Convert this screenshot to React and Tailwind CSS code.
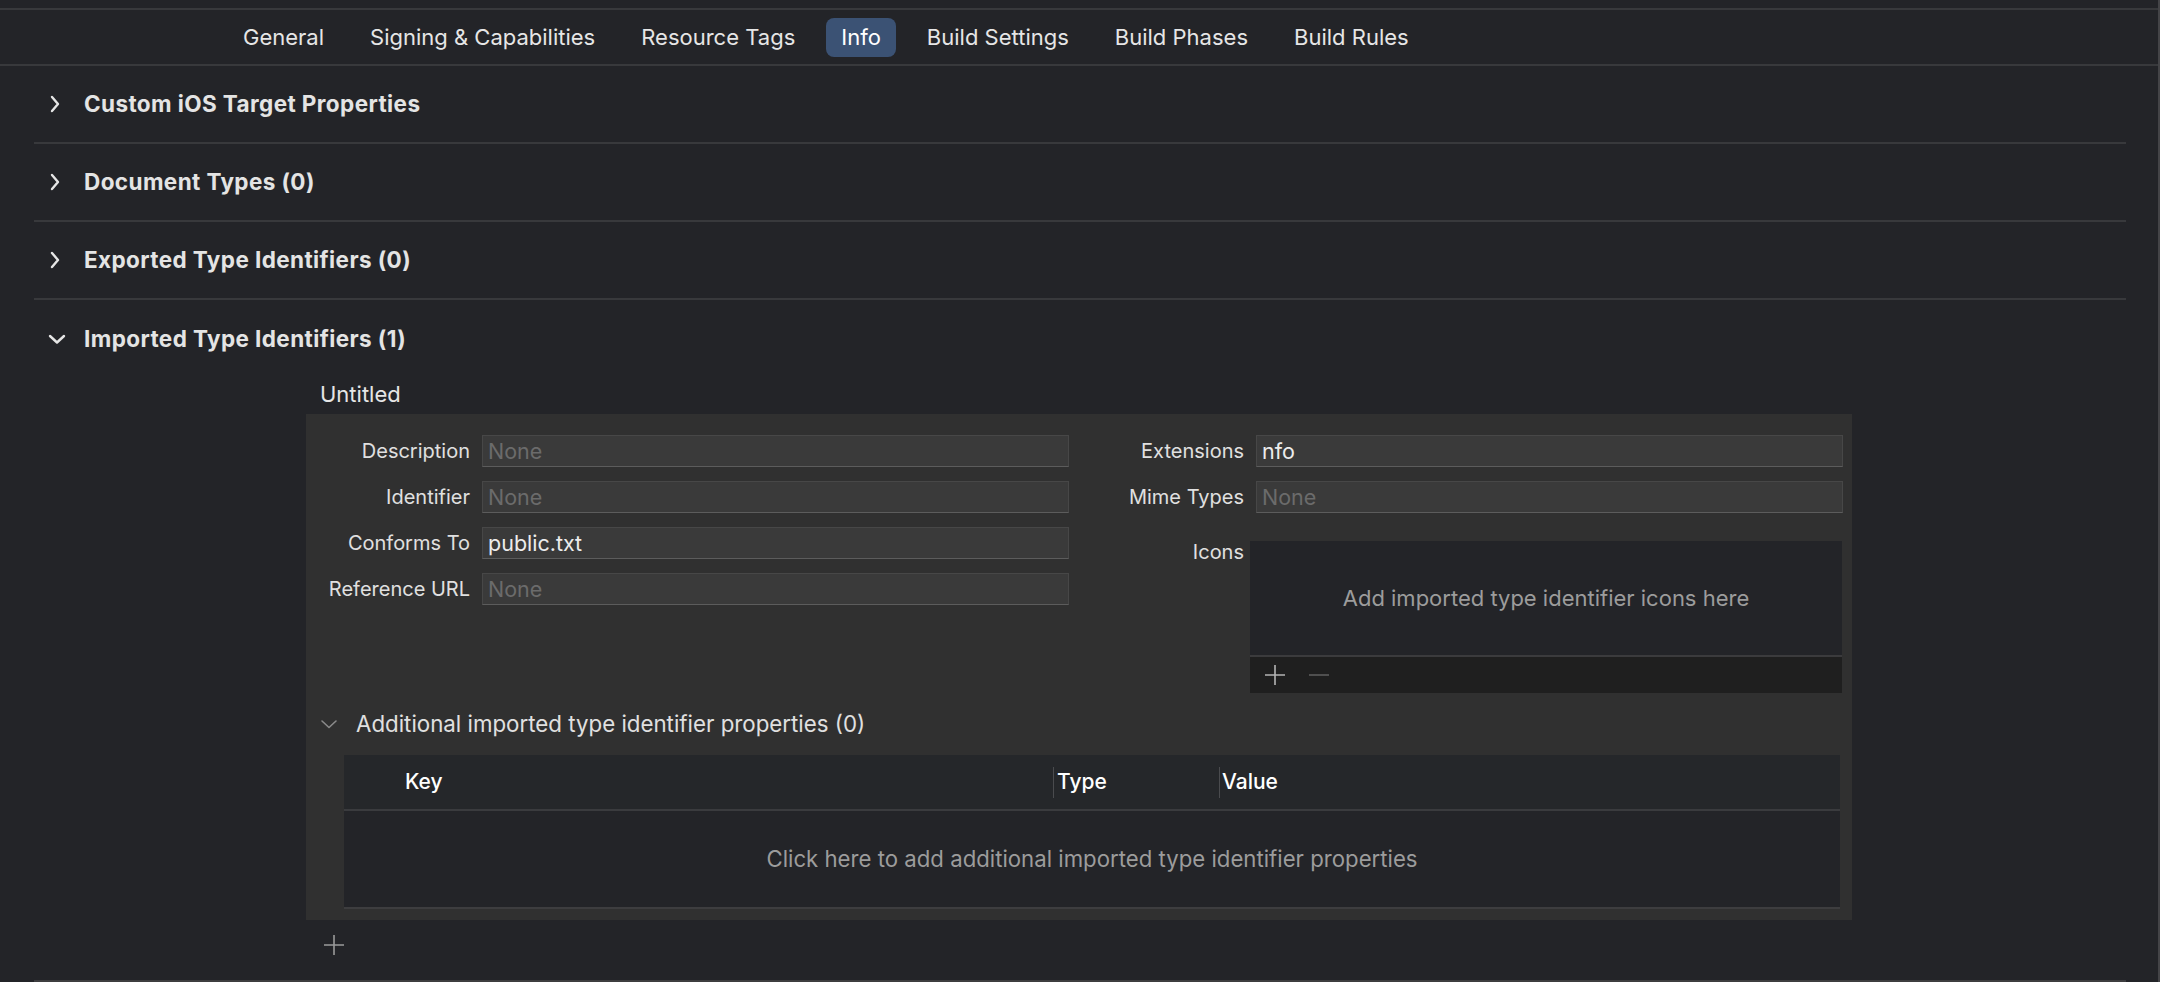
const TABS = ['General', 'Signing & Capabilities', 'Resource Tags', 'Info', 'Build Settings', 'Build Phases', 'Build Rules'];

const COLLAPSED = ['Custom iOS Target Properties', 'Document Types (0)', 'Exported Type Identifiers (0)'];

const LEFT_FIELDS = [
  { label: 'Description', value: '' },
  { label: 'Identifier', value: '' },
  { label: 'Conforms To', value: 'public.txt' },
  { label: 'Reference URL', value: '' },
];

function ChevronRight() {
  return (
    <svg width="14" height="18" viewBox="0 0 14 18" className="text-[#e6e6e6]">
      <polyline points="4,2 10,9 4,16" fill="none" stroke="currentColor" strokeWidth="2.4" strokeLinecap="round" strokeLinejoin="round" />
    </svg>
  );
}

function ChevronDown({ className = 'text-[#e6e6e6]', w = 2.4 }) {
  return (
    <svg width="18" height="14" viewBox="0 0 18 14" className={className}>
      <polyline points="2,4 9,10.5 16,4" fill="none" stroke="currentColor" strokeWidth={w} strokeLinecap="round" strokeLinejoin="round" />
    </svg>
  );
}

function Plus({ className }) {
  return (
    <svg width="22" height="22" viewBox="0 0 22 22" className={className}>
      <path d="M11 1v20M1 11h20" stroke="currentColor" strokeWidth="1.6" />
    </svg>
  );
}

// Xcode-style text field: flat grey with a slightly brighter bottom edge
function Field({ value }) {
  return (
    <div className="flex h-[32px] w-[587px] items-center border border-[#474747] border-b-[#5c5c5c] bg-[#3a3a3a] px-[5px] text-[21.5px]">
      {value ? (
        <span className="text-[#ececec]">{value}</span>
      ) : (
        <span className="text-[#6b6b6b]">None</span>
      )}
    </div>
  );
}

function Label({ children, w }) {
  return <div className={`${w} text-right text-[20px] text-[#e0e0e0]`}>{children}</div>;
}

function SectionHeader({ title, open, border = true }) {
  return (
    <div className={border ? 'flex h-[78px] items-center border-b-2 border-[#38393c]' : 'flex h-[78px] items-center'}>
      <div className="flex w-[50px] pl-[14px]">{open ? <ChevronDown /> : <ChevronRight />}</div>
      <span className="text-[22.5px] font-bold tracking-[0.4px] text-[#e4e4e4]">{title}</span>
    </div>
  );
}

export default function App() {
  return (
    <div className="relative h-[982px] w-[2160px] overflow-hidden bg-[#232428] text-[22px] font-['Inter','Liberation_Sans',sans-serif] text-[#e2e2e2]">
      {/* right edge of the editor */}
      <div className="absolute right-0 top-0 h-full w-[2px] bg-[#444447]" />

      <div className="h-[8px]" />
      <div className="flex h-[58px] items-center gap-[16px] border-y-2 border-[#38393c] pl-[228px]">
        {TABS.map((t) => (
          <div
            key={t}
            className={
              t === 'Info'
                ? 'flex h-[39px] items-center rounded-[8px] bg-[#3b5274] px-[15px] text-white'
                : 'flex h-[39px] items-center px-[15px] text-[#e6e6e6]'
            }
          >
            {t}
          </div>
        ))}
      </div>

      <div className="px-[34px]">
        {COLLAPSED.map((t) => (
          <SectionHeader key={t} title={t} />
        ))}
        <SectionHeader title="Imported Type Identifiers (1)" open border={false} />

        <div className="pl-[272px]">
          <div className="h-[36px] pl-[14px] leading-[32px] text-[#e6e6e6]">Untitled</div>

          <div className="w-[1546px] bg-[#303030] pb-[11px] pt-[21px]">
            <div className="flex">
              <div className="flex flex-col gap-[14px]">
                {LEFT_FIELDS.map((f) => (
                  <div key={f.label} className="flex items-center gap-[12px]">
                    <Label w="w-[164px]">{f.label}</Label>
                    <Field value={f.value} />
                  </div>
                ))}
              </div>

              <div className="flex flex-col">
                <div className="flex items-center gap-[12px]">
                  <Label w="w-[175px]">Extensions</Label>
                  <Field value="nfo" />
                </div>
                <div className="mt-[14px] flex items-center gap-[12px]">
                  <Label w="w-[175px]">Mime Types</Label>
                  <Field value="" />
                </div>
                <div className="mt-[28px] flex gap-[6px]">
                  <div className="w-[175px] text-right text-[20px] leading-[22px] text-[#e0e0e0]">Icons</div>
                  <div className="w-[592px]">
                    <div className="flex h-[114px] items-center justify-center bg-[#232428] text-[#9c9c9c]">
                      Add imported type identifier icons here
                    </div>
                    <div className="flex h-[38px] items-center gap-[22px] border-t-2 border-[#3b3b3d] bg-[#1f1f1f] pl-[14px]">
                      <Plus className="text-[#b4b4b4]" />
                      <svg width="22" height="22" viewBox="0 0 22 22" className="text-[#5c5c5c]">
                        <path d="M1 11h20" stroke="currentColor" strokeWidth="1.6" />
                      </svg>
                    </div>
                  </div>
                </div>
              </div>
            </div>

            <div className="flex h-[62px] items-center pl-[14px]">
              <div className="flex w-[36px] items-center">
                <ChevronDown className="text-[#8a8a8a]" w={1.6} />
              </div>
              <span className="text-[22.3px] text-[#e0e0e0]">Additional imported type identifier properties (0)</span>
            </div>

            <div className="ml-[38px] w-[1496px] border-b-2 border-[#3d3d3f] bg-[#232428]">
              <div className="relative flex h-[56px] items-center border-b-2 border-[#3a3b3e] bg-[#25272a] text-[21px] font-medium text-white">
                <span className="absolute left-[61px]">Key</span>
                <div className="absolute left-[709px] top-[12px] h-[31px] w-px bg-[#4a4b4e]" />
                <span className="absolute left-[713px]">Type</span>
                <div className="absolute left-[875px] top-[12px] h-[31px] w-px bg-[#4a4b4e]" />
                <span className="absolute left-[878px]">Value</span>
              </div>
              <div className="flex h-[96px] items-center justify-center text-[22.2px] text-[#9c9c9c]">
                Click here to add additional imported type identifier properties
              </div>
            </div>
          </div>

          <div className="pl-[17px] pt-[14px]">
            <Plus className="text-[#9a9a9a]" />
          </div>
        </div>
      </div>

      {/* bottom divider */}
      <div className="absolute bottom-0 left-[34px] h-[2px] w-[2092px] bg-[#3d3d3f]" />
    </div>
  );
}
